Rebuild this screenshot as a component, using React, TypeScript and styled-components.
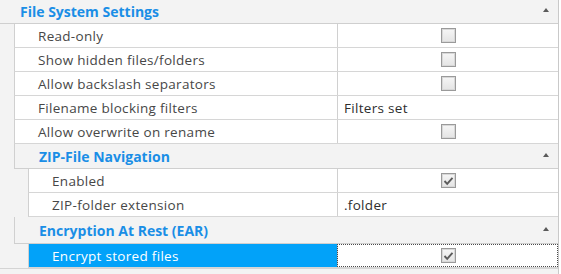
import React from "react";
import styled, { createGlobalStyle } from "styled-components";

const GlobalStyle = createGlobalStyle`
  html, body {
    margin: 0;
    padding: 0;
    background: #ffffff;
    overflow: hidden;
  }
  body {
    font-family: "Open Sans", "Noto Sans", sans-serif;
  }
`;

type Setting = {
  label: string;
  checked?: boolean;
  text?: string;
  selected?: boolean;
};

const fileSystem: Setting[] = [
  { label: "Read-only", checked: false },
  { label: "Show hidden files/folders", checked: false },
  { label: "Allow backslash separators", checked: false },
  { label: "Filename blocking filters", text: "Filters set" },
  { label: "Allow overwrite on rename", checked: false },
];

const zipNav: Setting[] = [
  { label: "Enabled", checked: true },
  { label: "ZIP-folder extension", text: ".folder" },
];

const encryption: Setting[] = [
  { label: "Encrypt stored files", checked: true, selected: true },
];

function Checkbox({ checked }: { checked?: boolean }) {
  return (
    <Box>
      {checked && (
        <svg width="11" height="10" viewBox="0 0 11 10">
          <polyline
            points="1.5,5 4.2,7.8 9.5,1.8"
            fill="none"
            stroke="#5c5c5c"
            strokeWidth="1.9"
          />
        </svg>
      )}
    </Box>
  );
}

function SettingRow({ item }: { item: Setting }) {
  return (
    <Row>
      <Label $selected={item.selected}>{item.label}</Label>
      <Value $focused={item.selected} $center={item.text === undefined}>
        {item.text !== undefined ? item.text : <Checkbox checked={item.checked} />}
      </Value>
    </Row>
  );
}

export default function App() {
  return (
    <>
      <GlobalStyle />
      <Grid>
        <CategoryHeader>
          <span>File System Settings</span>
          <Toggle />
        </CategoryHeader>
        <Group>
          {fileSystem.map((s) => (
            <SettingRow key={s.label} item={s} />
          ))}
          <SubHeader $height={25}>
            <span>ZIP-File Navigation</span>
            <Toggle />
          </SubHeader>
          <Group>
            {zipNav.map((s) => (
              <SettingRow key={s.label} item={s} />
            ))}
          </Group>
          <SubHeader $height={27}>
            <span>Encryption At Rest (EAR)</span>
            <Toggle />
          </SubHeader>
          <Group>
            {encryption.map((s) => (
              <SettingRow key={s.label} item={s} />
            ))}
          </Group>
        </Group>
        <CategoryHeader $topLine>
          <span>Virtual Folder Settings</span>
          <Toggle />
        </CategoryHeader>
      </Grid>
    </>
  );
}

const Grid = styled.div`
  width: 558px;
  height: 274px;
  border-right: 1px solid #c9c9c9;
  background: #f3f3f3;
  display: flex;
  flex-direction: column;
  overflow: hidden;
`;

const CategoryHeader = styled.div<{ $topLine?: boolean }>`
  flex: none;
  height: 24px;
  box-sizing: border-box;
  display: flex;
  align-items: center;
  padding-left: 20px;
  background: #f3f3f3;
  border-top: ${(p) => (p.$topLine ? "1px solid #d4d4d4" : "none")};
  border-bottom: 1px solid #cfcfcf;
  color: #1a8ee6;
  font-weight: 700;
  font-size: 14px;
  padding-bottom: 1px;
`;

const SubHeader = styled.div<{ $height: number }>`
  flex: none;
  height: ${(p) => p.$height}px;
  box-sizing: border-box;
  display: flex;
  align-items: center;
  padding-left: 24px;
  border-left: 1px solid #d0d0d0;
  border-bottom: 1px solid #cfcfcf;
  background: #f3f3f3;
  color: #1a8ee6;
  font-weight: 700;
  font-size: 14px;
`;

const Toggle = styled.i`
  margin-left: auto;
  margin-right: 9px;
  margin-bottom: 3px;
  width: 0;
  height: 0;
  border-left: 3.5px solid transparent;
  border-right: 3.5px solid transparent;
  border-bottom: 4px solid #5a5a5a;
`;

const Group = styled.div`
  display: flex;
  flex-direction: column;
  padding-left: 14px;
`;

const Row = styled.div`
  height: 24px;
  box-sizing: border-box;
  display: grid;
  grid-template-columns: 1fr 221px;
  border-left: 1px solid #d0d0d0;
  border-bottom: 1px solid #d6d6d6;
  background: #ffffff;
  font-size: 13.5px;
  letter-spacing: 0.3px;
  color: #474747;
`;

const Label = styled.div<{ $selected?: boolean }>`
  display: flex;
  align-items: center;
  padding-left: 23px;
  background: ${(p) => (p.$selected ? "#02a2f9" : "transparent")};
  color: ${(p) => (p.$selected ? "#ffffff" : "inherit")};
  white-space: nowrap;
`;

const Value = styled.div<{ $focused?: boolean; $center?: boolean }>`
  display: flex;
  align-items: center;
  justify-content: ${(p) => (p.$center ? "center" : "flex-start")};
  padding-left: ${(p) => (p.$center ? "0" : "6px")};
  border-left: 1px solid #d0d0d0;
  outline: ${(p) => (p.$focused ? "1px dotted #4a4a4a" : "none")};
  outline-offset: -1px;
  color: #2e2e2e;
`;

const Box = styled.span`
  width: 13px;
  height: 13px;
  border: 1px solid #9a9a9a;
  box-shadow: inset 0 0 0 1px #d8d8d8;
  background: linear-gradient(#f6f6f6, #e4e4e4);
  display: flex;
  align-items: center;
  justify-content: center;
`;
